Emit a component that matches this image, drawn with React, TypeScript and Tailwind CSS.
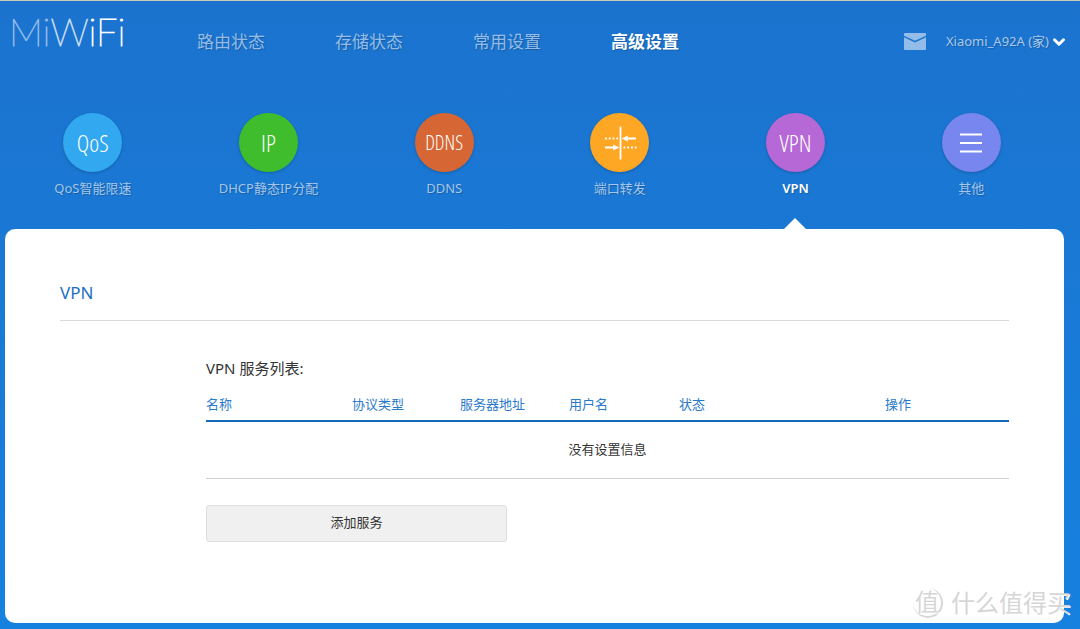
import { ChevronDown } from "lucide-react";

const navLinks = ["路由状态", "存储状态", "常用设置", "高级设置"];

const columns = [
  { label: "名称", width: "w-[146px]" },
  { label: "协议类型", width: "w-[108px]" },
  { label: "服务器地址", width: "w-[109px]" },
  { label: "用户名", width: "w-[110px]" },
  { label: "状态", width: "w-[206px]" },
  { label: "操作", width: "w-[124px]" },
];

function PortForwardIcon() {
  return (
    <svg viewBox="0 0 34 34" className="size-[34px]" fill="none" stroke="currentColor">
      <path d="M17.5 0.5v33" strokeWidth="1.8" />
      <path d="M2 12.5h13" strokeWidth="1.8" strokeDasharray="1.8 2" />
      <path d="M20.5 21.5h13" strokeWidth="1.8" strokeDasharray="1.8 2" />
      <path d="M33 12.5h-9M2 21.5h9" strokeWidth="1.8" />
      <path d="M18.8 12.5l6-3v6zM16.2 21.5l-6-3v6z" fill="currentColor" stroke="none" />
    </svg>
  );
}

function MenuIcon() {
  return (
    <svg viewBox="0 0 22 20" className="h-5 w-[22px]" fill="none" stroke="currentColor">
      <path d="M0 1.5h22M0 10h22M0 18.5h22" strokeWidth="2" />
    </svg>
  );
}

function MailIcon() {
  return (
    <svg viewBox="0 0 22 17" className="h-[17px] w-[22px]" fill="currentColor">
      <path d="M1 0h20a1 1 0 0 1 1 1v1.8L11 7.8 0 2.8V1a1 1 0 0 1 1-1z" />
      <path d="M0 4.2l11 5.2 11-5.2V16a1 1 0 0 1-1 1H1a1 1 0 0 1-1-1z" />
    </svg>
  );
}

const features = [
  { label: "QoS智能限速", color: "bg-[#31a8f0]", icon: "QoS", size: "text-2xl" },
  { label: "DHCP静态IP分配", color: "bg-[#40bd2d]", icon: "IP", size: "text-2xl" },
  { label: "DDNS", color: "bg-[#d66633]", icon: "DDNS", size: "text-xl" },
  { label: "端口转发", color: "bg-[#fea724]", icon: <PortForwardIcon />, size: "" },
  { label: "VPN", color: "bg-[#b568d6]", icon: "VPN", size: "text-2xl", active: true },
  { label: "其他", color: "bg-[#7886f0]", icon: <MenuIcon />, size: "" },
];

function Header() {
  return (
    <header className="flex h-20 items-center pt-px pr-3 pl-[9px]">
      <a
        href="#"
        className="w-[188px] pb-[22px] font-['Lato'] text-[38px] leading-none font-thin [-webkit-text-stroke:1px]"
      >
        <span className="text-[#8fbbe8]">Mi</span>
        <span className="text-[#c3daf3]">W</span>
        <span className="text-white">iFi</span>
      </a>
      <nav className="flex gap-[70px] text-[17px] text-shadow-[1px_1px_1px_#0003]">
        {navLinks.map((label) => (
          <a
            key={label}
            href="#"
            className={label === "高级设置" ? "font-bold text-white" : "text-[#93bde8]"}
          >
            {label}
          </a>
        ))}
      </nav>
      <a href="#" aria-label="消息" className="ml-auto text-[#93bde8]">
        <MailIcon />
      </a>
      <button className="ml-5 flex items-center gap-px text-[13px] text-[#a9c9ea] text-shadow-[1px_1px_1px_#0003]">
        Xiaomi_A92A (家)
        <ChevronDown className="size-[18px] text-white" strokeWidth={4} />
      </button>
    </header>
  );
}

function FeatureTabs() {
  return (
    <nav className="mr-[21px] ml-[5px] grid h-[148px] grid-cols-6 pt-8">
      {features.map((item) => (
        <a key={item.label} href="#" className="relative flex flex-col items-center">
          <span
            className={`flex size-[59px] items-center justify-center rounded-full font-['Open_Sans_Condensed_Light','Noto_Sans_ExtraCondensed_Light','Noto_Sans_ExtraCondensed','Roboto_Condensed',sans-serif] font-light text-white shadow-[0_1px_3px_#0003] ${item.color} ${item.size}`}
          >
            {item.icon}
          </span>
          <span
            className={`mt-1.5 text-[13px] leading-5 whitespace-nowrap text-shadow-[1px_1px_1px_#0003] ${item.active ? "font-semibold text-white" : "text-[#a3c6ea]"}`}
          >
            {item.label}
          </span>
          {item.active && (
            <span className="absolute bottom-0 border-x-[11px] border-b-[11px] border-x-transparent border-b-white" />
          )}
        </a>
      ))}
    </nav>
  );
}

function VpnPanel() {
  return (
    <main className="mr-4 mb-[6px] ml-[5px] grow rounded-[10px] bg-white px-[55px] pt-[50px]">
      <h1 className="border-b border-[#d9d9d9] pb-[13px] text-[17px] leading-7 text-[#1b6fc2]">
        VPN
      </h1>
      <section className="pt-[35px] pl-[146px] text-[13px] text-[#333]">
        <h2 className="text-[15px] leading-6">VPN 服务列表:</h2>
        <table className="mt-[10px] w-full table-fixed text-left">
          <thead className="border-b-2 border-[#1668b8] text-[#2a7acb]">
            <tr>
              {columns.map((col) => (
                <th key={col.label} className={`h-[31px] font-normal ${col.width}`}>
                  {col.label}
                </th>
              ))}
            </tr>
          </thead>
          <tbody>
            <tr className="border-b border-[#d0d0d0]">
              <td colSpan={6} className="h-[57px] text-center">
                没有设置信息
              </td>
            </tr>
          </tbody>
        </table>
        <button className="mt-[26px] h-[37px] w-[301px] rounded-[3px] border border-[#dedede] bg-[#f0f0f0]">
          添加服务
        </button>
      </section>
    </main>
  );
}

function Watermark() {
  return (
    <div className="absolute right-[9px] bottom-2 flex items-center gap-2 text-2xl leading-9 text-[#d6d6d6] text-shadow-[1px_1px_0_#fff]">
      <span className="flex size-[30px] items-center justify-center rounded-full border-r-2 border-b-2 border-[#d6d6d6]">
        值
      </span>
      <span>什么值得买</span>
    </div>
  );
}

export default function App() {
  return (
    <div className="relative flex min-h-screen flex-col border-t border-[#c9cbb8] bg-gradient-to-b from-[#1b73ce] to-[#1681df] font-['Noto_Sans','Noto_Sans_CJK_SC',sans-serif]">
      <Header />
      <FeatureTabs />
      <VpnPanel />
      <Watermark />
    </div>
  );
}
